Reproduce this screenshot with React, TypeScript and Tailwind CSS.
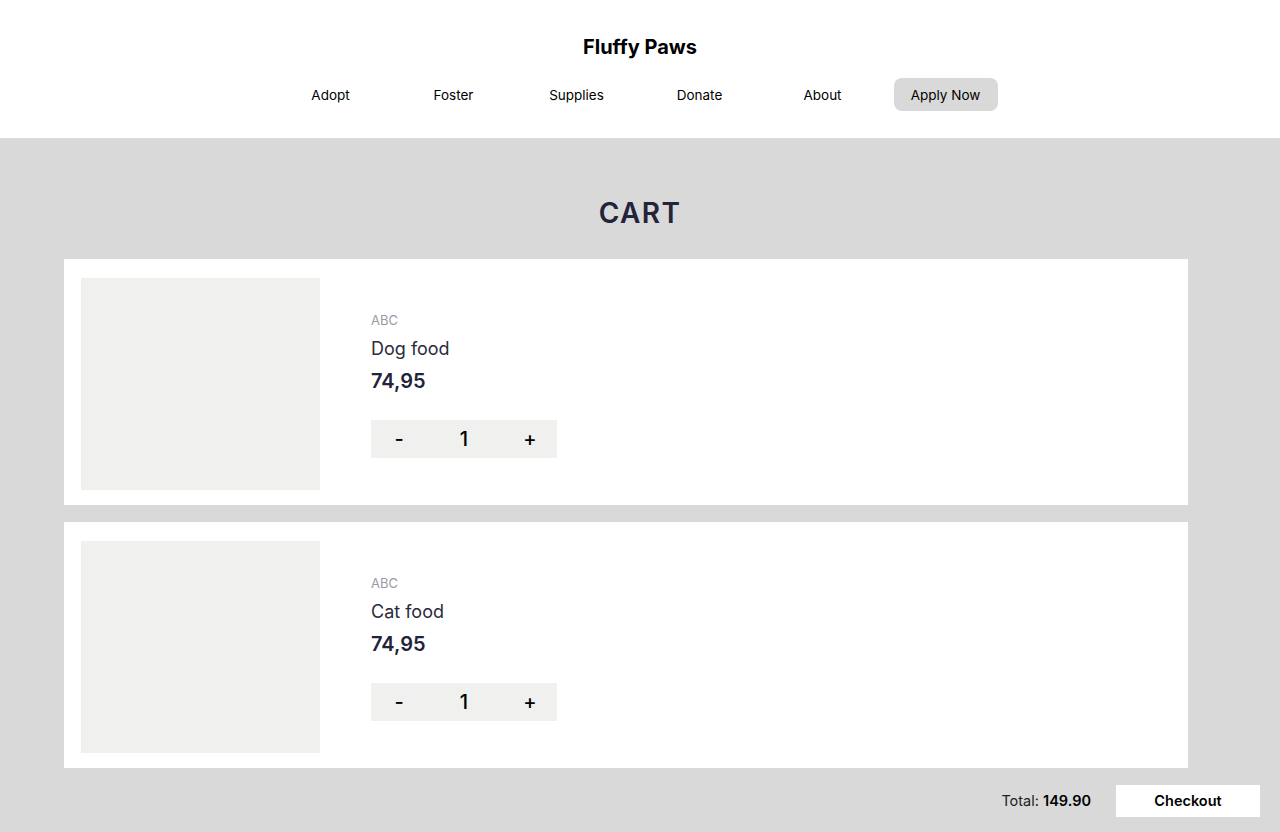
import { useState } from "react";

const navLinks = ["Adopt", "Foster", "Supplies", "Donate", "About"];

type Item = { id: number; brand: string; name: string; price: number };

const initialItems: Item[] = [
  { id: 1, brand: "ABC", name: "Dog food", price: 74.95 },
  { id: 2, brand: "ABC", name: "Cat food", price: 74.95 },
];

function CartRow({
  item,
  qty,
  onChange,
}: {
  item: Item;
  qty: number;
  onChange: (q: number) => void;
}) {
  return (
    <div className="flex bg-white h-[246px] pl-[17px] pt-[19px]">
      {/* image placeholder */}
      <div className="w-[239px] h-[212px] bg-[#f0f0ee] shrink-0" />
      <div className="flex flex-col pl-[51px] pt-[34px]">
        <span className="text-[13px] leading-[16px] text-[#9a9aa6]">{item.brand}</span>
        <span className="mt-[9px] text-[18px] leading-[24px] text-[#2a2a3c]">{item.name}</span>
        <span className="mt-[6px] text-[20px] leading-[28px] font-semibold text-[#23233a]">
          {item.price.toFixed(2).replace(".", ",")}
        </span>
        <div className="mt-[25px] flex items-center w-[186px] h-[38px] bg-[#f0f0ee] text-[20px] font-medium text-black">
          <button
            className="w-[56px] text-center"
            onClick={() => onChange(Math.max(1, qty - 1))}>
            -
          </button>
          <span className="flex-1 text-center">{qty}</span>
          <button className="w-[56px] pl-[2px] text-center" onClick={() => onChange(qty + 1)}>
            +
          </button>
        </div>
      </div>
    </div>
  );
}

export default function App() {
  const [qty, setQty] = useState<Record<number, number>>({ 1: 1, 2: 1 });

  const total = initialItems.reduce((sum, i) => sum + i.price * (qty[i.id] || 1), 0);

  return (
    <div className="min-h-[832px] bg-[#d9d9d9] font-['Inter','Liberation_Sans',sans-serif]">
      {/* Header */}
      <header className="bg-white h-[138px] flex flex-col items-center pt-[33px]">
        <h1 className="text-[20px] leading-[28px] font-bold text-black">Fluffy Paws</h1>
        <nav className="mt-[17px] flex gap-[19px] ml-[-4px]">
          {navLinks.map((l) => (
            <a
              key={l}
              href="#"
              className="w-[104px] h-[33px] pt-[1px] flex items-center justify-center text-[13.5px] text-black">
              {l}
            </a>
          ))}
          <button className="w-[104px] h-[33px] pt-[1px] rounded-[8px] bg-[#d9d9d9] text-[13.5px] text-black">
            Apply Now
          </button>
        </nav>
      </header>

      {/* Cart */}
      <main className="pt-[58px]">
        <h2 className="text-center text-[28px] leading-[34px] font-semibold tracking-[0.05em] text-[#23233a]">
          CART
        </h2>
        <div className="mt-[29px] ml-[64px] w-[1124px] flex flex-col gap-[17px]">
          {initialItems.map((item) => (
            <CartRow
              key={item.id}
              item={item}
              qty={qty[item.id] || 1}
              onChange={(q) => setQty((pre) => ({ ...pre, [item.id]: q }))}
            />
          ))}
        </div>
        <div className="mt-[17px] flex justify-end items-center gap-[25px] pr-[20px]">
          <span className="text-[14.5px] text-[#222]">
            Total: <span className="font-semibold text-black">{total.toFixed(2)}</span>
          </span>
          <button className="w-[144px] h-[32px] bg-white text-[14.5px] font-semibold text-black">
            Checkout
          </button>
        </div>
      </main>
    </div>
  );
}
